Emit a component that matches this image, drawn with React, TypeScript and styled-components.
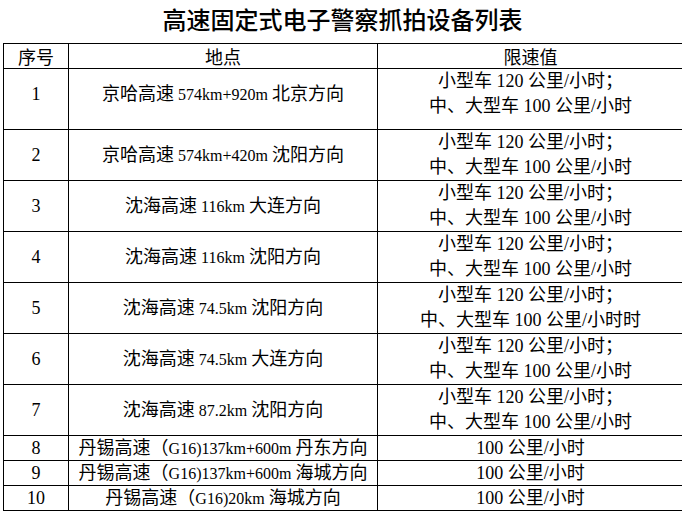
import styled, { createGlobalStyle } from 'styled-components';

const GlobalStyle = createGlobalStyle`
  html, body {
    margin: 0;
    padding: 0;
    background: #ffffff;
  }
`;

const Page = styled.div`
  width: 682px;
  padding-left: 3px;
  box-sizing: border-box;
  font-family: 'Liberation Serif', 'Noto Sans CJK SC', serif;
  color: #000;
`;

const Title = styled.h1`
  margin: 0;
  height: 43px;
  line-height: 38px;
  text-align: center;
  font-family: 'Noto Sans CJK SC', sans-serif;
  font-size: 24px;
  font-weight: 500;
`;

const Table = styled.table`
  width: 677px;
  border-collapse: collapse;
  table-layout: fixed;
  font-size: 18px;
`;

const HeadRow = styled.tr`
  height: 25px;
`;

const HeadCell = styled.th<{ $w: number }>`
  width: ${(p) => p.$w}px;
  padding: 0;
  border: 1px solid #000;
  font-family: 'Noto Sans CJK SC', sans-serif;
  font-weight: 400;
  font-size: 18px;
  line-height: 22px;
`;

const Row = styled.tr<{ $h: number }>`
  height: ${(p) => p.$h}px;
`;

const Cell = styled.td<{ $tall?: boolean; $single?: boolean }>`
  padding: 0 0 ${(p) => (p.$tall ? '10px' : '0')} 0;
  border: 1px solid #000;
  text-align: center;
  vertical-align: middle;
  line-height: ${(p) => (p.$single ? '23px' : '25px')};
  white-space: nowrap;
`;

const Latin = styled.span`
  font-family: 'Liberation Serif', serif;
  font-size: 16px;
`;

type Item = {
  no: number;
  place: string;
  limit: string[];
  h: number;
};

const small = '小型车 120 公里/小时；';
const big = '中、大型车 100 公里/小时';

const items: Item[] = [
  { no: 1, place: '京哈高速 574km+920m 北京方向', limit: [small, big], h: 60 },
  { no: 2, place: '京哈高速 574km+420m 沈阳方向', limit: [small, big], h: 51 },
  { no: 3, place: '沈海高速 116km 大连方向', limit: [small, big], h: 51 },
  { no: 4, place: '沈海高速 116km 沈阳方向', limit: [small, big], h: 51 },
  { no: 5, place: '沈海高速 74.5km 沈阳方向', limit: [small, '中、大型车 100 公里/小时时'], h: 51 },
  { no: 6, place: '沈海高速 74.5km 大连方向', limit: [small, big], h: 51 },
  { no: 7, place: '沈海高速 87.2km 沈阳方向', limit: [small, big], h: 51 },
  { no: 8, place: '丹锡高速（G16)137km+600m 丹东方向', limit: ['100 公里/小时'], h: 25 },
  { no: 9, place: '丹锡高速（G16)137km+600m 海城方向', limit: ['100 公里/小时'], h: 25 },
  { no: 10, place: '丹锡高速（G16)20km 海城方向', limit: ['100 公里/小时'], h: 25 },
];

// the km marks are narrower than the CJK text around them
const renderPlace = (s: string) =>
  s.split(/([ A-Za-z0-9.+)]+)/).map((part, i) =>
    i % 2 === 1 ? <Latin key={i}>{part}</Latin> : part
  );

export default function App() {
  return (
    <>
      <GlobalStyle />
      <Page>
        <Title>高速固定式电子警察抓拍设备列表</Title>
        <Table>
          <thead>
            <HeadRow>
              <HeadCell $w={64}>序号</HeadCell>
              <HeadCell $w={308}>地点</HeadCell>
              <HeadCell $w={305}>限速值</HeadCell>
            </HeadRow>
          </thead>
          <tbody>
            {items.map((it) => {
              const single = it.limit.length === 1;
              return (
                <Row key={it.no} $h={it.h}>
                  <Cell $tall={it.no === 1} $single={single}>
                    {it.no}
                  </Cell>
                  <Cell $tall={it.no === 1} $single={single}>
                    {renderPlace(it.place)}
                  </Cell>
                  <Cell $tall={it.no === 1} $single={single}>
                    {it.limit.map((l, i) => (
                      <div key={i}>{l}</div>
                    ))}
                  </Cell>
                </Row>
              );
            })}
          </tbody>
        </Table>
      </Page>
    </>
  );
}
